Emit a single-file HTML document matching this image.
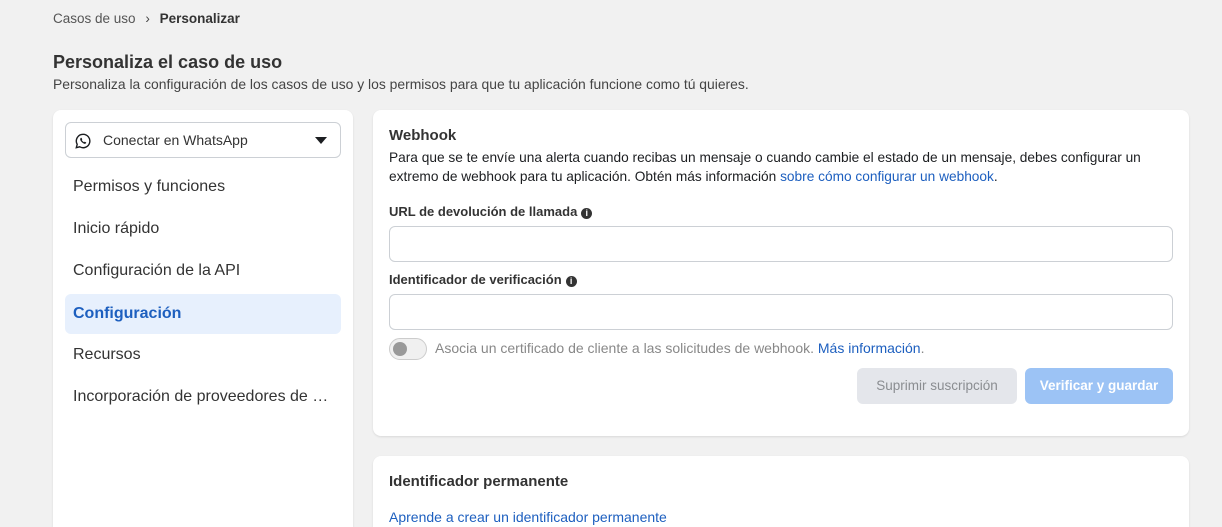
<!DOCTYPE html>
<html style="width:1222px;height:527px;overflow:hidden"><head><meta charset="utf-8"><style>
*{box-sizing:border-box;margin:0;padding:0}
body{width:1222px;height:527px;overflow:hidden;background:#f1f1f1;font-family:"Liberation Sans",sans-serif;color:#1c1e21;position:relative}
.abs{position:absolute;white-space:nowrap}
.card{position:absolute;background:#fff;border-radius:8px;box-shadow:0 1px 2px rgba(0,0,0,.1)}
.nav{position:absolute;left:12px;width:276px;height:40px;font-size:16px;padding-left:8px;line-height:40px;color:#333}
.input{position:absolute;left:16px;width:784px;height:36px;border:1px solid #ccd0d5;border-radius:6px}
a{color:#1d5fbf;text-decoration:none}
.lbl{font-size:13px;font-weight:bold;color:#333}
.i{display:inline-block;width:11px;height:11px;border-radius:50%;background:#333;color:#fff;font-size:9px;text-align:center;line-height:11px;vertical-align:0;margin-left:4px;font-weight:bold}
</style></head><body>
<div class="abs" style="left:53px;top:11px;font-size:13.5px;color:#555">Casos de uso <span style="margin:0 6px;color:#444">›</span> <b style="color:#333">Personalizar</b></div>
<div class="abs" style="left:53px;top:52px;font-size:18px;font-weight:bold;color:#333">Personaliza el caso de uso</div>
<div class="abs" style="left:53px;top:76px;font-size:13.9px;color:#444">Personaliza la configuración de los casos de uso y los permisos para que tu aplicación funcione como tú quieres.</div>

<div class="card" style="left:53px;top:110px;width:300px;height:417px;border-radius:8px 8px 0 0">
  <div style="position:absolute;left:12px;top:12px;width:276px;height:36px;border:1px solid #ccd0d5;border-radius:6px">
    <svg style="position:absolute;left:9px;top:10px" width="16" height="16" viewBox="0 0 16 16"><path d="M8 1.3a6.7 6.7 0 0 0-5.8 10l-.9 3.4 3.5-.9A6.7 6.7 0 1 0 8 1.3z" fill="none" stroke="#1c1e21" stroke-width="1.4"/><path d="M5.7 5c.3-.4.8-.3 1 .1l.5 1.1c.1.3-.2.6-.4.8.5 1 1.2 1.7 2.2 2.2.2-.2.5-.5.8-.4l1.1.5c.4.2.5.7.1 1-.6.6-1.4.7-2.3.2-1.4-.7-2.6-1.9-3.3-3.3-.4-.9-.3-1.6.3-2.2z" fill="#1c1e21"/></svg>
    <span class="abs" style="left:37px;top:9px;font-size:14px;color:#333">Conectar en WhatsApp</span>
    <span style="position:absolute;right:13px;top:14px;border-left:6px solid transparent;border-right:6px solid transparent;border-top:7px solid #1c1e21"></span>
  </div>
  <div class="nav" style="top:57px">Permisos y funciones</div>
  <div class="nav" style="top:99px">Inicio rápido</div>
  <div class="nav" style="top:141px">Configuración de la API</div>
  <div class="nav" style="top:184px;background:#e7f0fd;color:#1d5fbf;font-weight:bold;border-radius:6px">Configuración</div>
  <div class="nav" style="top:225px">Recursos</div>
  <div class="nav" style="top:267px">Incorporación de proveedores de …</div>
</div>

<div class="card" style="left:373px;top:110px;width:816px;height:326px">
  <div class="abs" style="left:16px;top:17px;font-size:15px;font-weight:bold;color:#333">Webhook</div>
  <div style="position:absolute;left:16px;top:38px;width:790px;font-size:13.7px;line-height:19px;color:#1c1e21">Para que se te envíe una alerta cuando recibas un mensaje o cuando cambie el estado de un mensaje, debes configurar un extremo de webhook para tu aplicación. Obtén más información <a>sobre cómo configurar un webhook</a>.</div>
  <div class="abs lbl" style="left:16px;top:94px">URL de devolución de llamada<span class="i">i</span></div>
  <div class="input" style="top:116px"></div>
  <div class="abs lbl" style="left:16px;top:162px">Identificador de verificación<span class="i">i</span></div>
  <div class="input" style="top:184px"></div>
  <div style="position:absolute;left:16px;top:228px;width:38px;height:22px;border-radius:11px;background:#f0f0f0;border:1px solid #ccc"><div style="position:absolute;left:3px;top:3px;width:14px;height:14px;border-radius:50%;background:#999"></div></div>
  <div class="abs" style="left:62px;top:230px;font-size:14px;color:#888">Asocia un certificado de cliente a las solicitudes de webhook. <a>Más información</a>.</div>
  <div style="position:absolute;left:484px;top:258px;width:160px;height:36px;border-radius:6px;background:#e4e6eb;color:#8a8d91;font-size:13.5px;text-align:center;line-height:36px">Suprimir suscripción</div>
  <div style="position:absolute;left:652px;top:258px;width:148px;height:36px;border-radius:6px;background:#9cc3f5;color:#fff;font-weight:bold;font-size:13.5px;text-align:center;line-height:36px">Verificar y guardar</div>
</div>

<div class="card" style="left:373px;top:456px;width:816px;height:71px;border-radius:8px 8px 0 0">
  <div class="abs" style="left:16px;top:17px;font-size:15px;font-weight:bold;color:#333">Identificador permanente</div>
  <div class="abs" style="left:16px;top:53px;font-size:14px"><a>Aprende a crear un identificador permanente</a></div>
</div>
</body></html>
